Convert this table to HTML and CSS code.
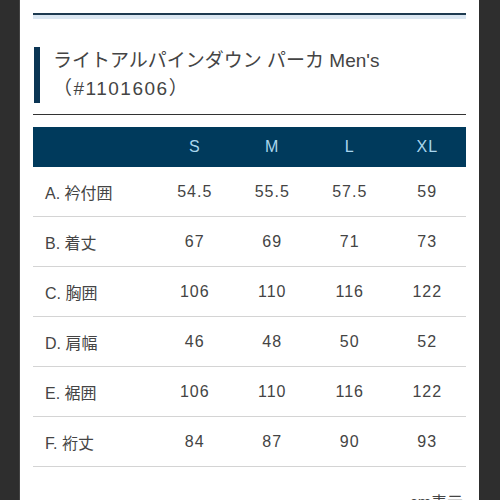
FILE: index.html
```html
<!DOCTYPE html>
<html lang="ja">
<head>
<meta charset="utf-8">
<link rel="stylesheet" href="styles.css">
</head>
<body>
<div class="page">
  <div class="top-rule"></div>
  <h2 class="title">ライトアルパインダウン パーカ Men's<br><span class="code">（#1101606）</span></h2>
  <hr class="divider">
  <table class="size-table">
    <thead>
      <tr><th class="label"></th><th>S</th><th>M</th><th>L</th><th>XL</th></tr>
    </thead>
    <tbody>
      <tr><td class="label">A. 衿付囲</td><td>54.5</td><td>55.5</td><td>57.5</td><td>59</td></tr>
      <tr><td class="label">B. 着丈</td><td>67</td><td>69</td><td>71</td><td>73</td></tr>
      <tr><td class="label">C. 胸囲</td><td>106</td><td>110</td><td>116</td><td>122</td></tr>
      <tr><td class="label">D. 肩幅</td><td>46</td><td>48</td><td>50</td><td>52</td></tr>
      <tr><td class="label">E. 裾囲</td><td>106</td><td>110</td><td>116</td><td>122</td></tr>
      <tr><td class="label">F. 裄丈</td><td>84</td><td>87</td><td>90</td><td>93</td></tr>
    </tbody>
  </table>
  <p class="unit">cm表示</p>
</div>
</body>
</html>
```

FILE: styles.css
```css
html, body {
  margin: 0;
  padding: 0;
  background: #2e2e2e;
  height: 100%;
  overflow: hidden;
}
body {
  font-family: "Liberation Sans", "Noto Sans CJK JP", sans-serif;
  color: #444;
}
.page {
  margin-left: 19px;
  width: 433px;
  padding: 13px 13px 0;
  background: #fff;
  min-height: 100%;
  border-left: 1px solid #444;
}
.top-rule {
  height: 4px;
  border-top: 2px solid #1d3a50;
  background: #dbe7f2;
}
.title {
  margin: 28px 0 0 1px;
  border-left: 6px solid #0b3554;
  padding-left: 13px;
  font-size: 19px;
  font-weight: normal;
  line-height: 28px;
  color: #444;
}
.title .code {
  letter-spacing: 1.5px;
}
.divider {
  margin: 11px 0 0;
  border: 0;
  border-top: 1px solid #333;
  height: 0;
}
.size-table {
  margin-top: 12px;
  width: 100%;
  border-collapse: collapse;
  table-layout: fixed;
  font-size: 16px;
}
.size-table th {
  background: #003a5c;
  color: #a9d6ee;
  font-weight: normal;
  height: 40px;
  padding: 0;
  text-align: center;
  letter-spacing: 1px;
}
.size-table th.label,
.size-table td.label {
  width: 123px;
}
.size-table td {
  height: 49px;
  padding: 0;
  text-align: center;
  border-bottom: 1px solid #d4d4d4;
  color: #444;
  letter-spacing: 1px;
}
.size-table td.label {
  text-align: left;
  padding-left: 12px;
  letter-spacing: 0;
}
.unit {
  margin: 22px 0 0;
  text-align: right;
  font-size: 16px;
  padding-right: 3px;
}
```
